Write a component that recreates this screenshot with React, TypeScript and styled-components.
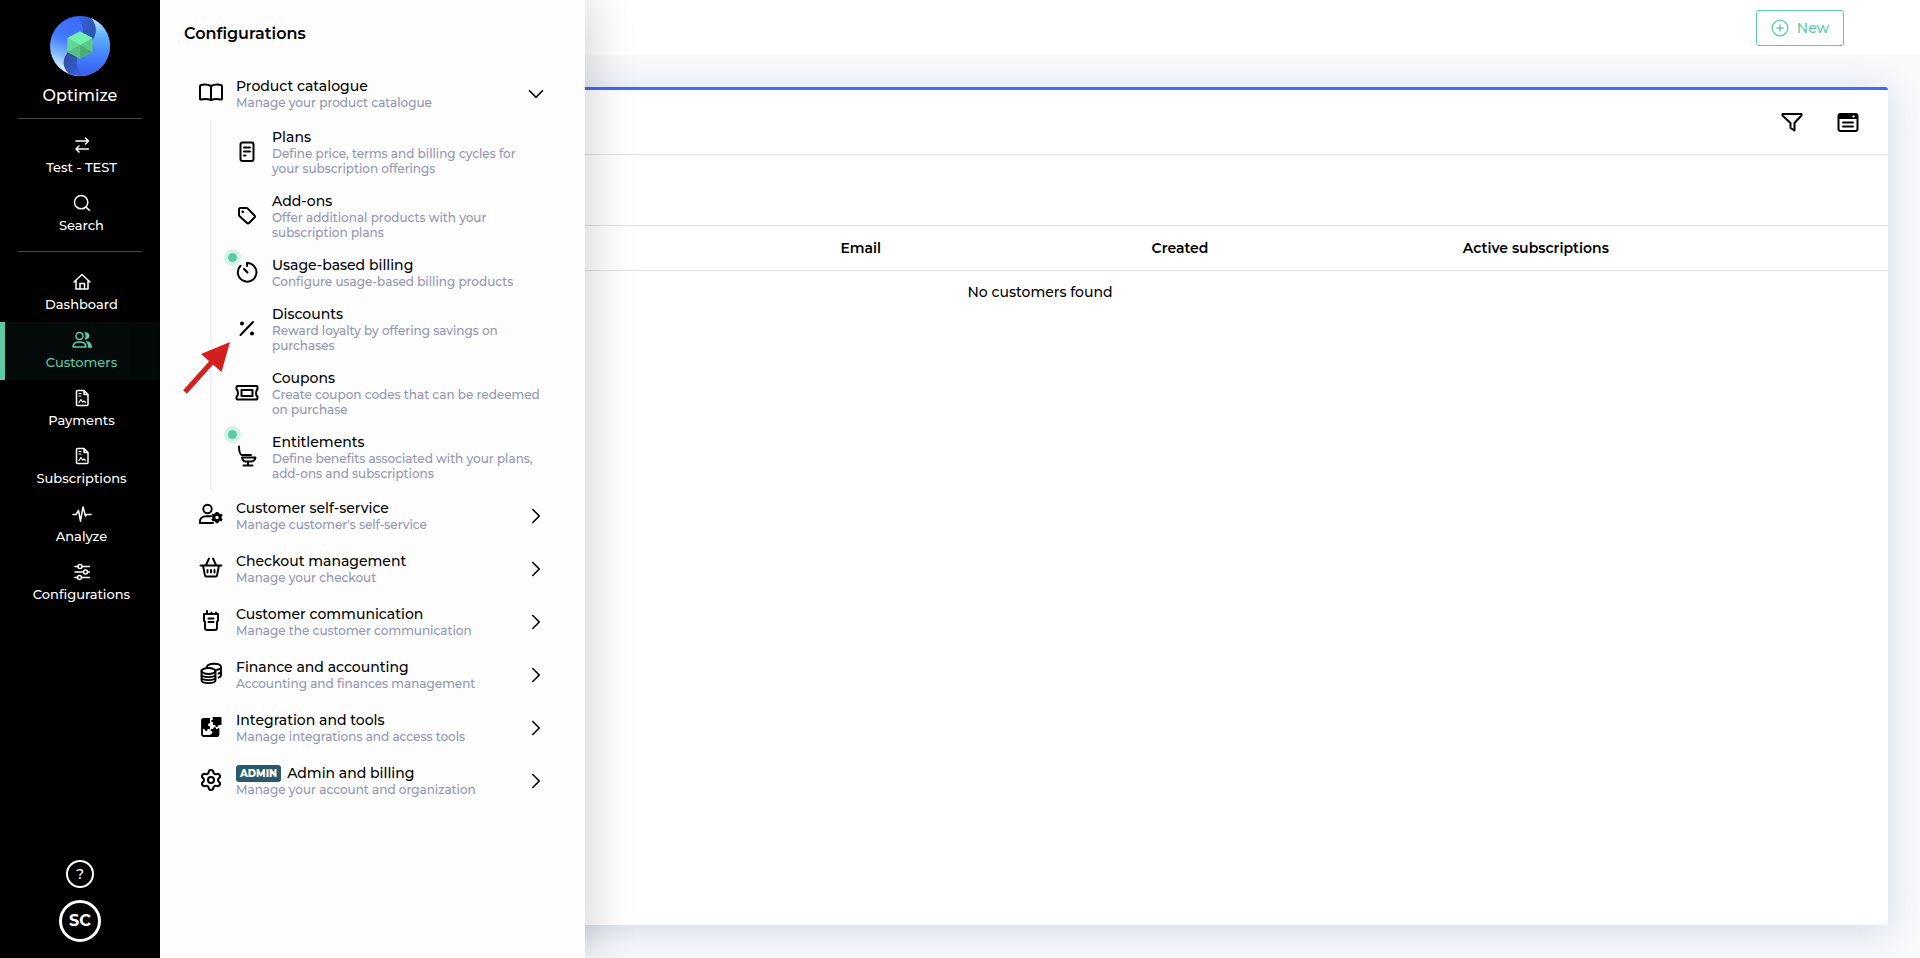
import React from "react";
import styled, { createGlobalStyle, css } from "styled-components";
import { ChevronDown, ChevronRight, Search, Settings } from "lucide-react";

const GlobalStyle = createGlobalStyle`
  *, *::before, *::after { box-sizing: border-box; }
  body {
    margin: 0;
    background: #f8f9fb;
    color: #000;
    font-family: Montserrat, Inter, "Open Sans", sans-serif;
    font-size: 14px;
    font-weight: 500;
  }
  button { font: inherit; color: inherit; background: none; border: 0; padding: 0; cursor: pointer; }
  a { color: inherit; text-decoration: none; }
  ul { list-style: none; margin: 0; padding: 0; }
  h1, h2, p { margin: 0; }
  svg { display: block; flex: none; }
`;

const Page = styled.div`
  position: relative;
  display: flex;
  min-height: 100vh;
`;

const Sidebar = styled.nav`
  display: flex;
  flex-direction: column;
  width: 160px;
  flex: none;
  padding: 16px 0;
  background: #000;
  color: #fff;
`;

const Brand = styled.a`
  display: flex;
  flex-direction: column;
  align-items: center;
  gap: 8px;
  font-size: 16px;
  line-height: 24px;
`;

const Divider = styled.hr`
  width: 124px;
  height: 1px;
  margin: 0 auto;
  border: 0;
  background: #484848;
`;

const NavList = styled.ul`
  display: flex;
  flex-direction: column;
  padding: 8px 0;
`;

const Brandline = styled.div`
  padding-bottom: 10px;
`;

const MainNavList = styled(NavList)`
  padding-top: 12px;
`;

const navItem = css<{ $active?: boolean }>`
  display: flex;
  flex-direction: column;
  align-items: center;
  gap: 3px;
  width: 100%;
  height: 58px;
  padding: 8px 2px 0 0;
  border: 0;
  border-left: 5px solid ${(p) => (p.$active ? "#5ccba5" : "transparent")};
  background: ${(p) => (p.$active ? "#030a09" : "transparent")};
  color: ${(p) => (p.$active ? "#5ccba5" : "#fff")};
  font-size: 13px;
  font-weight: 500;
  line-height: 18px;
`;

const NavLink = styled.a<{ $active?: boolean }>`${navItem}`;
const NavButton = styled.button<{ $active?: boolean }>`
  && { ${navItem} }
`;

const SidebarFooter = styled.div`
  display: flex;
  flex-direction: column;
  align-items: center;
  gap: 12px;
  margin-top: auto;
`;

const HelpButton = styled.button`
  && {
    width: 28px;
    height: 28px;
    border: 2px solid #fff;
    border-radius: 50%;
    font-size: 14px;
    line-height: 20px;
  }
`;

const Avatar = styled.button`
  && {
    width: 42px;
    height: 42px;
    border: 3px solid #fff;
    border-radius: 50%;
    font-size: 16px;
    font-weight: 700;
    line-height: 20px;
  }
`;

const Panel = styled.aside`
  position: absolute;
  top: 0;
  bottom: 0;
  left: 160px;
  width: 425px;
  background: #fdfdfd;
  box-shadow: 10px 0 40px rgba(0, 0, 0, 0.15);
`;

const PanelTitle = styled.h2`
  padding: 22px 24px;
  font-size: 16px;
  font-weight: 600;
  line-height: 23px;
`;

const GroupButton = styled.button`
  && {
    display: flex;
    align-items: center;
    gap: 13px;
    width: 100%;
    padding: 10px 36px 10px 39px;
    text-align: left;
  }

  > svg:first-child {
    margin-bottom: 2px;
  }
`;

const SubList = styled.ul`
  margin-left: 50px;
  border-left: 2px solid #f0f0f8;
`;

const SubLink = styled.a`
  position: relative;
  display: flex;
  align-items: center;
  gap: 13px;
  padding: 8px 40px 8px 23px;
`;

const ItemText = styled.span`
  display: flex;
  flex-direction: column;
  flex: 1;
  min-width: 0;
`;

const ItemTitle = styled.span`
  display: flex;
  align-items: center;
  gap: 6px;
  font-size: 14px;
  line-height: 18px;
`;

const ItemDescription = styled.span`
  color: #9095b2;
  font-size: 12px;
  line-height: 15px;
`;

const AdminBadge = styled.span`
  padding: 0 4px;
  border-radius: 3px;
  background: #285a6c;
  color: #fff;
  font-size: 10px;
  font-weight: 800;
  line-height: 17px;
`;

const Dot = styled.span`
  position: absolute;
  top: 5px;
  left: 16px;
  width: 9px;
  height: 9px;
  border-radius: 50%;
  background: #5ccba5;
  box-shadow: 0 0 0 4px #d5f2e9;
`;

const Arrow = styled.svg`
  position: absolute;
  top: 339px;
  left: 180px;
  pointer-events: none;
`;

const Main = styled.main`
  display: flex;
  flex-direction: column;
  flex: 1;
  min-width: 0;
`;

const TopBar = styled.header`
  display: flex;
  align-items: center;
  justify-content: flex-end;
  height: 55px;
  padding: 0 76px;
  background: #fff;
`;

const NewButton = styled.button`
  && {
    display: flex;
    align-items: center;
    justify-content: center;
    gap: 8px;
    width: 88px;
    height: 36px;
    border: 1px solid #5ccba5;
    border-radius: 3px;
    color: #5ccba5;
    font-size: 14px;
    font-weight: 500;
  }
`;

const Card = styled.section`
  flex: 1;
  margin: 32px 32px 33px;
  border-top: 3px solid #3f69ff;
  border-radius: 3px;
  background: #fff;
  box-shadow: 0 6px 36px rgba(50, 90, 150, 0.19);
`;

const Toolbar = styled.div`
  display: flex;
  align-items: center;
  justify-content: flex-end;
  gap: 32px;
  height: 65px;
  padding: 0 28px;
  border-bottom: 1px solid #e2e2e8;
`;

const FilterRow = styled.div`
  height: 70px;
`;

const Table = styled.table`
  width: 100%;
  border-collapse: collapse;
  table-layout: fixed;
`;

const HeadCell = styled.th<{ $last?: boolean }>`
  width: ${(p) => (p.$last ? "auto" : "18.35%")};
  height: 45px;
  padding: 0 26px;
  border-top: 1px solid #e2e2e8;
  border-bottom: 1px solid #e2e2e8;
  font-size: 14px;
  font-weight: 600;
  text-align: left;
  white-space: nowrap;
`;

const EmptyCell = styled.td`
  height: 42px;
  padding: 0;
  font-size: 14px;
  text-align: center;
`;

type IconProps = { size?: number; width?: number; children: React.ReactNode };

const Icon = ({ size = 24, width = 2, children }: IconProps) => (
  <svg
    width={size}
    height={size}
    viewBox="0 0 24 24"
    fill="none"
    stroke="currentColor"
    strokeWidth={width}
    strokeLinecap="round"
    strokeLinejoin="round"
    aria-hidden="true"
  >
    {children}
  </svg>
);

const NavIcon = ({ children }: { children: React.ReactNode }) => (
  <svg width={20} height={20} viewBox="0 0 20 20" fill="none" stroke="currentColor" strokeWidth={1.5} strokeLinecap="round" strokeLinejoin="round" aria-hidden="true">
    {children}
  </svg>
);

const Logo = () => (
  <svg width="60" height="60" viewBox="0 0 60 60" aria-hidden="true">
    <defs>
      <linearGradient id="leftBlob" x1="0.6" y1="0" x2="0.2" y2="1">
        <stop offset="0" stopColor="#3a66fb" />
        <stop offset="0.45" stopColor="#437bfb" />
        <stop offset="0.7" stopColor="#7fb8fb" />
        <stop offset="0.95" stopColor="#eefaff" />
      </linearGradient>
      <linearGradient id="rightBlob" x1="0.5" y1="0" x2="0.5" y2="1">
        <stop offset="0" stopColor="#d4f1ff" />
        <stop offset="0.3" stopColor="#62b6fd" />
        <stop offset="0.6" stopColor="#458bfb" />
        <stop offset="1" stopColor="#3a5af6" />
      </linearGradient>
      <linearGradient id="upperFold" x1="0" y1="0" x2="1" y2="1">
        <stop offset="0" stopColor="#3764e8" />
        <stop offset="1" stopColor="#2b4f9c" />
      </linearGradient>
      <linearGradient id="lowerFold" x1="0" y1="0" x2="1" y2="1">
        <stop offset="0" stopColor="#2a4c94" />
        <stop offset="1" stopColor="#3a62e6" />
      </linearGradient>
      <clipPath id="disc"><circle cx="30" cy="30" r="30" /></clipPath>
    </defs>
    <g clipPath="url(#disc)">
      <rect width="60" height="60" fill="url(#leftBlob)" />
      <path d="M41 2C50 14 45 24 38 30S12 42 19 58L30 60H60V0Z" fill="url(#rightBlob)" />
      <path d="M27 0C34 7 33 15 33 22L42 24C46 19 48 10 41 2Z" fill="url(#upperFold)" />
      <path d="M33 60C26 53 27 45 27 38L18 36C12 43 12 51 19 58Z" fill="url(#lowerFold)" />
    </g>
    <path d="M30 15.500L42.500 22V36L30 42.500L17.500 36V22Z" fill="#5cc88a" />
    <path d="M30 15.500L42.500 22L30 29L17.500 22Z" fill="#72f2b0" />
    <path d="M17.500 22L30 29L17.500 36Z" fill="#62d894" />
    <path d="M30 29L42.500 36L30 42.500Z" fill="#4dab75" />
    <path d="M30 29L17.500 36L30 42.500Z" fill="#58bf82" />
  </svg>
);

const SwitchIcon = () => (
  <NavIcon><path d="M4 6H16.500M13.500 3L16.500 6L13.500 9M16.500 14H4M7 11L4 14L7 17" /></NavIcon>
);
const HomeIcon = () => (
  <NavIcon><path d="M2 10L10 2.500L18 10M4 8.500V17H16V8.500M8 17V11.500H12.500V17" /></NavIcon>
);
const CustomersIcon = () => (
  <NavIcon>
    <circle cx="7.500" cy="6" r="3.500" />
    <path d="M1 17C1 13.500 3.500 12 7.500 12S14 13.500 14 17Z" />
    <path d="M12 2.300C19 1 19.500 9.500 12.500 9.600C14 7.500 14 4.500 12 2.300ZM13.500 11C18 11 20 14 20 17.700H16C16 14.500 15.500 13 13.500 11Z" fill="currentColor" stroke="none" />
  </NavIcon>
);
const InvoiceIcon = () => (
  <NavIcon>
    <path d="M5.500 2.500H12L16 6.500V16.500Q16 17.500 15 17.500H5.500Q4.500 17.500 4.500 16.500V3.500Q4.500 2.500 5.500 2.500ZM12 2.500V6.500H16" />
    <path d="M7 5.500H9M7 8H9M7 14.500L9 11.500L10.500 14L12 13L13.500 14.500" strokeWidth={1.2} />
  </NavIcon>
);
const PulseIcon = () => (
  <NavIcon><path d="M1 10.500H4L6.500 6.500L8.500 17L11 3L13.500 12L14.500 10.500H19" /></NavIcon>
);
const SlidersIcon = () => (
  <NavIcon>
    <path d="M3 4.500H6M10 4.500H17.500M3 10H11.500M15.500 10H17.500M3 15.500H5.500M9.500 15.500H17.500" />
    <circle cx="8" cy="4.500" r="2" /><circle cx="13.500" cy="10" r="2" /><circle cx="7.500" cy="15.500" r="2" />
  </NavIcon>
);

const BookIcon = () => (
  <Icon width={2}>
    <path d="M12 5C9 3.500 5 3.300 2 4Q1 4.200 1 5.200V17.500Q1 18.800 2.200 18.500C5.500 17.600 9 17.800 12 19C15 17.800 18.500 17.600 21.800 18.500Q23 18.800 23 17.500V5.200Q23 4.200 22 4C19 3.300 15 3.500 12 5V19" />
  </Icon>
);
const PlansIcon = () => (
  <Icon><rect x="5.500" y="2.500" width="13" height="18.500" rx="2" /><path d="M9 7.500H15M9 11.500H15M9 15.500H10.500" /></Icon>
);
const TagIcon = () => (
  <Icon>
    <path d="M4 5.500Q4 4 5.500 4H11.500Q12.200 4 12.800 4.600L19.500 11.500Q20.500 12.500 19.500 13.500L14 19Q13 20 12 19L4.600 12.300Q4 11.800 4 11Z" />
    <circle cx="7.700" cy="7.700" r="1.300" fill="currentColor" stroke="none" />
  </Icon>
);
const UsageIcon = () => (
  <Icon><path d="M12 5V2A9.300 9.300 0 1 1 5.500 4.800M9 8L12.500 11.500" /></Icon>
);
const PercentIcon = () => (
  <Icon>
    <path d="M18 5L5.500 18" />
    <circle cx="7" cy="6.500" r="2" fill="currentColor" stroke="none" />
    <circle cx="17" cy="16.500" r="2" fill="currentColor" stroke="none" />
  </Icon>
);
const CouponIcon = () => (
  <Icon width={2}>
    <path d="M2.500 5H21.500Q22.500 5 22.500 6V8C20.500 10 20.500 14 22.500 16V17Q22.500 18.500 21.500 18.500H2.500Q1.500 18.500 1.500 17.500V16C3.500 14 3.500 10 1.500 8V6Q1.500 5 2.500 5Z" />
    <rect x="6.500" y="9" width="11" height="6" />
  </Icon>
);
const SeatIcon = () => (
  <Icon width={1.900}><path d="M4 1.500C4 6 4.500 8.500 6.500 10H16M7 12.500H20.500C20 15.500 18.500 16.500 16 16.500H10.500C8.500 16.500 7.500 15 7 12.500ZM13 16.500V20.500M8.500 20.500H17.500" /></Icon>
);
const SelfServiceIcon = () => (
  <Icon width={1.900}>
    <circle cx="8.500" cy="6" r="4.200" />
    <path d="M14 20H0.900C0.500 15.500 3 13.200 7.500 13.200H12" />
    <circle cx="18" cy="14.500" r="3.200" strokeWidth={3} />
    <path d="M18 9V11M18 18V20.200M13 11.700L14.500 12.500M21.500 16.500L23 17.400M13 17.400L14.500 16.500M21.500 12.500L23 11.700" strokeWidth={2.800} strokeLinecap="butt" />
  </Icon>
);
const BasketIcon = () => (
  <Icon width={1.900}>
    <path d="M1.500 9.500H22.500M4 9.500L6 19.500Q6.200 20.500 7 20.500H17Q17.800 20.500 18 19.500L20 9.500M7 9L10 2.500M17 9L14 2.500M8.500 14V16.500M12 14V16.500M15.500 14V16.500" />
  </Icon>
);
const CommunicationIcon = () => (
  <Icon width={2}>
    <path d="M5 5H19V11Q19 12 18 13V19Q18 21 16 21H8Q6 21 6 19V13Q5 12 5 11ZM8 5V2M12.500 4.500V3.500M17 4.500V3.500M9.500 9.500H14.500M9.500 13H14.500" />
  </Icon>
);
const FinanceIcon = () => (
  <Icon width={1.900}>
    <ellipse cx="9.500" cy="9" rx="7" ry="3" />
    <path d="M2.500 9V18C2.500 22.200 16.500 22.200 16.500 18V9M2.500 12C2.500 16.200 16.500 16.200 16.500 12M2.500 15C2.500 19.200 16.500 19.200 16.500 15M8 5C8 1 22 0.500 22 4.800V13C22 14.500 21 15.300 19.500 15.600M22 5C22 6.500 20.500 7.500 18 7.700M22 9C22 10.500 21 11.300 19.500 11.500" />
  </Icon>
);
const PuzzleIcon = () => (
  <Icon width={1.800}>
    <path d="M10 4H4.500Q3 4 3 5.500V19.500Q3 21 4.500 21H18Q19.500 21 19.500 19.500V14" />
    <path d="M4.500 3.300H11V8.200C8.500 7.500 8.500 12 11 11.200V14H8.500C9.300 16.500 5 16.500 5.800 14H3V5Q3 3.300 4.500 3.300Z" fill="currentColor" stroke="none" />
    <path d="M12 14H14.300C13.500 11.500 17.800 11.500 17 14H20V20Q20 21.500 18.500 21.500H11.500V18.800C14 19.500 14 15.500 11.500 16.200Z" fill="currentColor" stroke="none" />
    <path d="M13.500 2H21.500Q22.500 2 22.500 3V10H19.500C20 12.500 15.500 12.500 16.300 10H14V7C11.500 8 11.500 4 14 4.800Z" fill="currentColor" stroke="none" />
  </Icon>
);
const FilterIcon = () => (
  <Icon width={2}><path d="M2.500 4H21.500V5.500L14.500 13V20.500L10.500 18V13L2.500 5.500Z" /></Icon>
);
const ColumnsIcon = () => (
  <Icon width={2}>
    <rect x="2.500" y="4" width="19" height="17" rx="2" />
    <path d="M2.500 4H21.500V9H2.500Z" fill="currentColor" stroke="none" />
    <path d="M7 12.500H17M7 16.500H17" />
    <path d="M17 6H18.500L17.700 7Z" fill="#fff" stroke="#fff" strokeWidth={1} />
  </Icon>
);

const accountItems = [
  { label: "Test - TEST", icon: <SwitchIcon /> },
  { label: "Search", icon: <Search size={20} strokeWidth={1.8} /> },
];

const navItems = [
  { label: "Dashboard", icon: <HomeIcon /> },
  { label: "Customers", icon: <CustomersIcon />, active: true },
  { label: "Payments", icon: <InvoiceIcon /> },
  { label: "Subscriptions", icon: <InvoiceIcon /> },
  { label: "Analyze", icon: <PulseIcon /> },
  { label: "Configurations", icon: <SlidersIcon /> },
];

const catalogueItems = [
  { title: "Plans", text: "Define price, terms and billing cycles for your subscription offerings", icon: <PlansIcon /> },
  { title: "Add-ons", text: "Offer additional products with your subscription plans", icon: <TagIcon /> },
  { title: "Usage-based billing", text: "Configure usage-based billing products", icon: <UsageIcon />, dot: true },
  { title: "Discounts", text: "Reward loyalty by offering savings on purchases", icon: <PercentIcon /> },
  { title: "Coupons", text: "Create coupon codes that can be redeemed on purchase", icon: <CouponIcon /> },
  { title: "Entitlements", text: "Define benefits associated with your plans, add-ons and subscriptions", icon: <SeatIcon />, dot: true },
];

const groups = [
  { title: "Product catalogue", text: "Manage your product catalogue", icon: <BookIcon />, children: catalogueItems },
  { title: "Customer self-service", text: "Manage customer's self-service", icon: <SelfServiceIcon /> },
  { title: "Checkout management", text: "Manage your checkout", icon: <BasketIcon /> },
  { title: "Customer communication", text: "Manage the customer communication", icon: <CommunicationIcon /> },
  { title: "Finance and accounting", text: "Accounting and finances management", icon: <FinanceIcon /> },
  { title: "Integration and tools", text: "Manage integrations and access tools", icon: <PuzzleIcon /> },
  { title: "Admin and billing", text: "Manage your account and organization", icon: <Settings size={24} strokeWidth={2} />, admin: true },
];

export default function App() {
  return (
    <Page>
      <GlobalStyle />
      <Sidebar>
        <Brandline>
          <Brand href="#"><Logo />Optimize</Brand>
        </Brandline>
        <Divider />
        <NavList>
          {accountItems.map((item) => (
            <li key={item.label}><NavButton type="button">{item.icon}{item.label}</NavButton></li>
          ))}
        </NavList>
        <Divider />
        <MainNavList>
          {navItems.map((item) => (
            <li key={item.label}><NavLink href="#" $active={item.active}>{item.icon}{item.label}</NavLink></li>
          ))}
        </MainNavList>
        <SidebarFooter>
          <HelpButton type="button">?</HelpButton>
          <Avatar type="button">SC</Avatar>
        </SidebarFooter>
      </Sidebar>

      <Main>
        <TopBar>
          <NewButton type="button">
            <Icon size={18} width={1.8}><circle cx="12" cy="12" r="10.500" /><path d="M12 8V16M8 12H16" /></Icon>
            New
          </NewButton>
        </TopBar>
        <Card>
          <Toolbar>
            <button type="button" aria-label="Filter"><FilterIcon /></button>
            <button type="button" aria-label="Columns"><ColumnsIcon /></button>
          </Toolbar>
          <FilterRow />
          <Table>
            <thead>
              <tr>
                <HeadCell />
                <HeadCell />
                <HeadCell>Email</HeadCell>
                <HeadCell>Created</HeadCell>
                <HeadCell>Active subscriptions</HeadCell>
                <HeadCell $last />
              </tr>
            </thead>
            <tbody>
              <tr><EmptyCell colSpan={6}>No customers found</EmptyCell></tr>
            </tbody>
          </Table>
        </Card>
      </Main>

      <Panel>
        <PanelTitle>Configurations</PanelTitle>
        <ul>
          {groups.map((group) => (
            <li key={group.title}>
              <GroupButton type="button" aria-expanded={Boolean(group.children)}>
                {group.icon}
                <ItemText>
                  <ItemTitle>{group.admin && <AdminBadge>ADMIN</AdminBadge>}{group.title}</ItemTitle>
                  <ItemDescription>{group.text}</ItemDescription>
                </ItemText>
                {group.children ? <ChevronDown size={26} strokeWidth={1.5} /> : <ChevronRight size={26} strokeWidth={1.5} />}
              </GroupButton>
              {group.children && (
                <SubList>
                  {group.children.map((item) => (
                    <li key={item.title}>
                      <SubLink href="#">
                        {item.icon}
                        <ItemText>
                          <ItemTitle>{item.title}</ItemTitle>
                          <ItemDescription>{item.text}</ItemDescription>
                        </ItemText>
                        {item.dot && <Dot />}
                      </SubLink>
                    </li>
                  ))}
                </SubList>
              )}
            </li>
          ))}
        </ul>
      </Panel>

      <Arrow width="54" height="58" viewBox="0 0 54 58" aria-hidden="true">
        <path d="M5 53L32 23" stroke="#d41f1f" strokeWidth="5" />
        <path d="M50 3L21 15L41.500 33Z" fill="#d41f1f" />
      </Arrow>
    </Page>
  );
}
